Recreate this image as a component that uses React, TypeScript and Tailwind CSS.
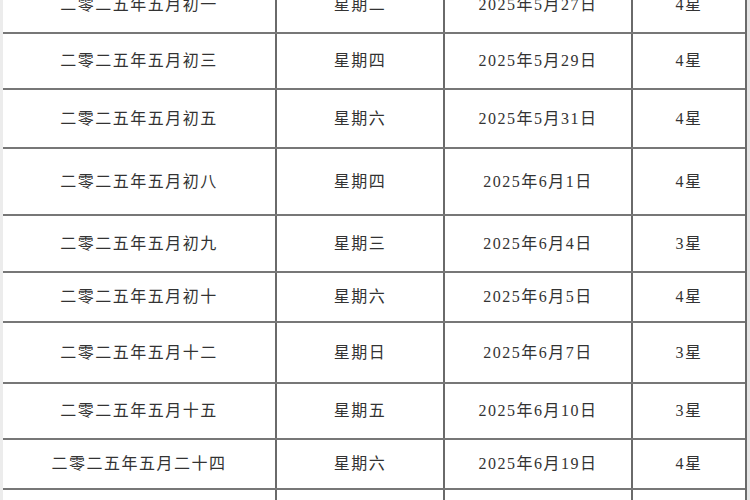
const rows = [
  { lunar: '二零二五年五月初一', week: '星期二', date: '2025年5月27日', star: '4星', h: 'h-[57px]' },
  { lunar: '二零二五年五月初三', week: '星期四', date: '2025年5月29日', star: '4星', h: 'h-[56px]' },
  { lunar: '二零二五年五月初五', week: '星期六', date: '2025年5月31日', star: '4星', h: 'h-[59px]' },
  { lunar: '二零二五年五月初八', week: '星期四', date: '2025年6月1日', star: '4星', h: 'h-[67px]' },
  { lunar: '二零二五年五月初九', week: '星期三', date: '2025年6月4日', star: '3星', h: 'h-[57px]' },
  { lunar: '二零二五年五月初十', week: '星期六', date: '2025年6月5日', star: '4星', h: 'h-[50px]' },
  { lunar: '二零二五年五月十二', week: '星期日', date: '2025年6月7日', star: '3星', h: 'h-[61px]' },
  { lunar: '二零二五年五月十五', week: '星期五', date: '2025年6月10日', star: '3星', h: 'h-[56px]' },
  { lunar: '二零二五年五月二十四', week: '星期六', date: '2025年6月19日', star: '4星', h: 'h-[50px]' },
  { lunar: '', week: '', date: '', star: '', h: 'h-[60px]' },
];

const cell = 'flex items-center justify-center border-r-2 border-[#6a6a6a]';

export default function App() {
  return (
    <div
      className="flex h-[500px] w-[750px] overflow-hidden bg-white text-[16px] tracking-[1.5px] text-[#333]"
      style={{ fontFamily: '"Liberation Serif", "Noto Sans CJK SC", serif' }}
    >
      <div className="w-[3px] shrink-0 bg-[#ececec]" />
      <div className="-mt-[23px] flex w-[744px] flex-col border-r-2 border-[#6a6a6a]">
        {rows.map((r, i) => (
          <div
            key={i}
            className={`grid shrink-0 grid-cols-[274px_168px_188px_1fr] border-b-2 border-[#777] ${r.h}`}
          >
            <div className={cell}>{r.lunar}</div>
            <div className={cell}>{r.week}</div>
            <div className={cell}>{r.date}</div>
            <div className="flex items-center justify-center">{r.star}</div>
          </div>
        ))}
      </div>
      <div className="w-[3px] shrink-0 bg-[#e6e6e6]" />
    </div>
  );
}
